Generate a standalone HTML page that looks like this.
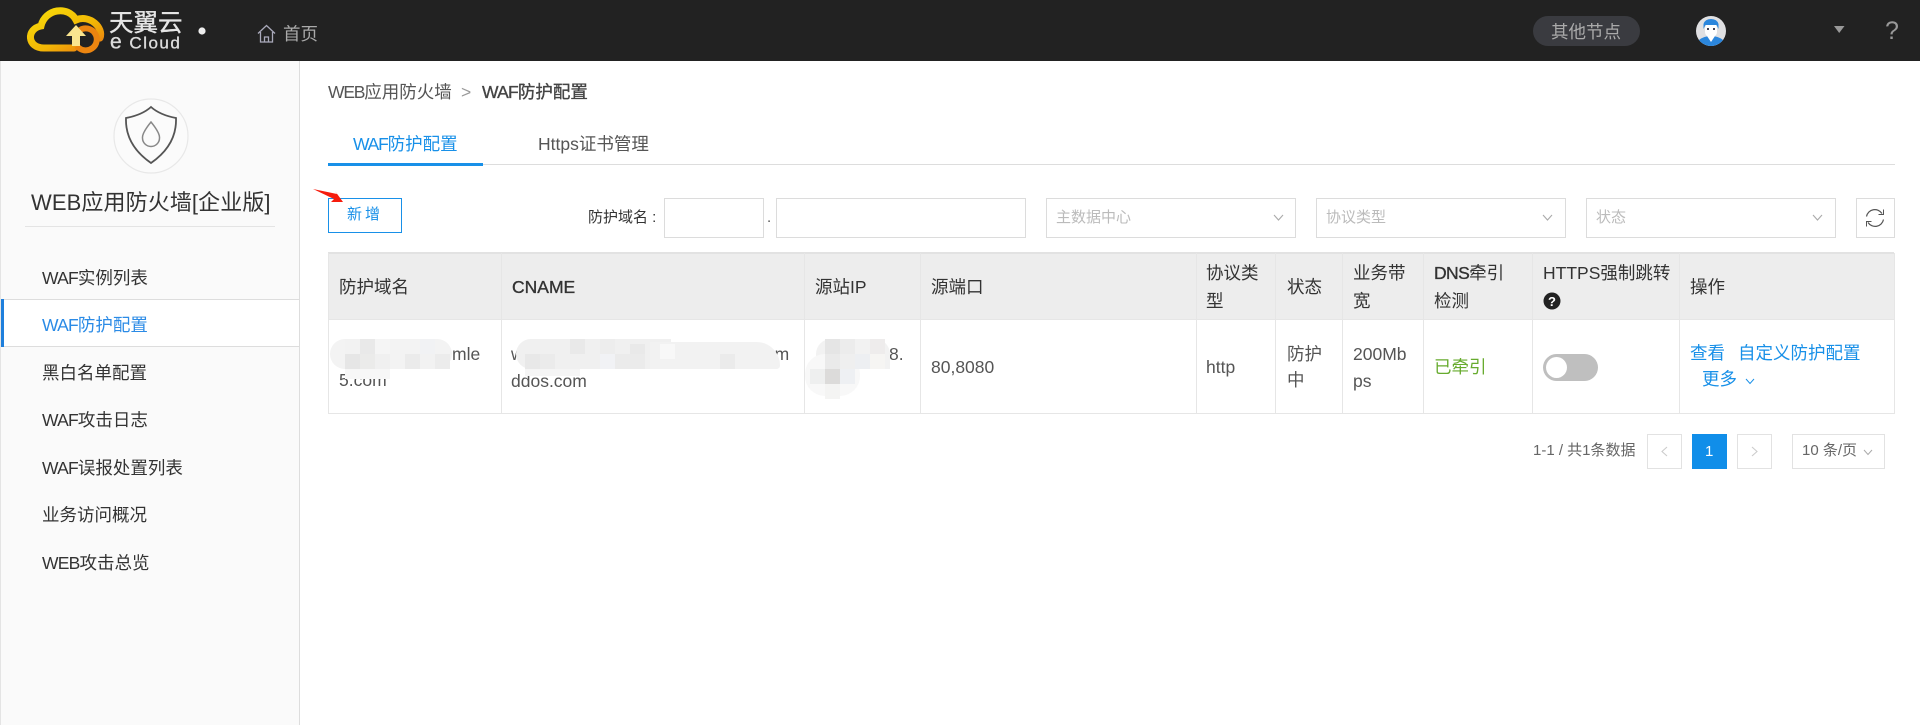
<!DOCTYPE html>
<html lang="zh"><head><meta charset="utf-8"><title>WAF防护配置</title>
<style>
html,body{margin:0;padding:0;background:#fff;}
body{position:relative;width:1920px;height:725px;overflow:hidden;font-family:"Liberation Sans","Noto Sans CJK SC",sans-serif;font-size:17.5px;color:#444;}
.b{position:absolute;box-sizing:border-box;}
.t{position:absolute;white-space:nowrap;line-height:24px;transform:translateY(-50%);}
.h{color:#333;}
.w{letter-spacing:-.8px;}
.s{-webkit-text-stroke:.35px currentColor;}
.box{position:absolute;box-sizing:border-box;border:1.5px solid #dcdcdc;background:#fff;}
.ph{position:absolute;white-space:nowrap;line-height:24px;transform:translateY(-50%);font-size:15px;color:#bbb;}
.v{position:absolute;top:253px;height:161px;width:1px;background:#e6e6e6;}
.m{position:absolute;width:15px;height:15px;}
svg{position:absolute;overflow:visible;}
</style></head><body>
<div class="b" style="left:0;top:0;width:1920px;height:61px;background:#222;"></div>
<svg style="left:0;top:0" width="220" height="61" viewBox="0 0 220 61">
<defs><linearGradient id="g" x1="0" y1="0" x2="1" y2="1"><stop offset="0" stop-color="#f7dc0a"/><stop offset=".6" stop-color="#f2b705"/><stop offset="1" stop-color="#ea7a10"/></linearGradient></defs>
<path d="M74 48H44C27 48 26 29 41 26C45 9 68 5 76 20C90 14 104 28 100 38" fill="none" stroke="url(#g)" stroke-width="7" stroke-linecap="round"/>
<path d="M80 30A11 11 0 1 1 77 46" fill="none" stroke="#ec8510" stroke-width="6"/>
<path d="M76 25L86 36H80V46H72V36H66Z" fill="#f9e58f"/>
<circle cx="202" cy="31" r="3.6" fill="#eee"/>
</svg>
<div class="t s" style="left:109px;top:24px;font-size:24.500px;color:#e6e6e6;">天翼云</div>
<div class="t s" style="left:110px;top:43px;font-size:17px;color:#ddd;letter-spacing:1.500px;"><span style="font-size:21px;">e</span> Cloud</div>
<svg style="left:257px;top:24px" width="20" height="20" viewBox="0 0 20 20" fill="none" stroke="#aab" stroke-width="1.3"><path d="M1 9.500L9.500 1.500L18 9.500M3.500 8V18H15.500V8M7.500 18V13H11.500V18"/></svg>
<div class="t" style="left:283px;top:34px;color:#aaa;">首页</div>
<div class="b" style="left:1533px;top:16px;width:107px;height:30px;border-radius:15px;background:#3a3b40;"></div>
<div class="t" style="left:1551px;top:32px;color:#aaa;">其他节点</div>
<svg style="left:1696px;top:16px" width="30" height="30" viewBox="0 0 30 30">
<circle cx="15" cy="15" r="15" fill="#e0e0e2"/><path d="M3 24Q8 20 15 20Q22 20 27 24A15 15 0 0 1 3 24Z" fill="#2b86dc"/><path d="M11 20L15 26L19 20Z" fill="#fff"/><rect x="9" y="7" width="12" height="14" rx="5" fill="#fff"/><path d="M7.500 13V8Q9 3 15 3Q21 3 22.500 8V13L20.500 9H9.500Z" fill="#2b86dc"/><rect x="11" y="12" width="2" height="2" fill="#445"/><rect x="17" y="12" width="2" height="2" fill="#445"/>
</svg>
<svg style="left:1834px;top:26px" width="11" height="8"><path d="M0 0H10.500L5.200 7Z" fill="#999"/></svg>
<div class="t" style="left:1885px;top:31px;font-size:25px;color:#999;">?</div>

<div class="b" style="left:0;top:61px;width:300px;height:664px;background:#fafafa;border-left:1px solid #e4e4e4;border-right:1.5px solid #ddd;"></div>
<svg style="left:113px;top:98px" width="76" height="76" viewBox="0 0 76 76" fill="none">
<circle cx="38" cy="38" r="37" fill="#fbfbfb" stroke="#e8e8e8" stroke-width="1.2"/>
<path d="M38 9Q47 17 63 20Q64 47 38 65Q12 47 13 20Q29 17 38 9Z" stroke="#555" stroke-width="1.8"/>
<path d="M38 24Q47 35 46.500 40A8.500 8.500 0 0 1 29.500 40Q29 35 38 24Z" stroke="#888" stroke-width="1.500"/>
</svg>
<div class="t" style="left:31px;top:203px;font-size:22px;color:#333;letter-spacing:.1px;">WEB应用防火墙[企业版]</div>
<div class="b" style="left:25px;top:226px;width:250px;height:1px;background:#e4e4e4;"></div>
<div class="b" style="left:1px;top:299px;width:298px;height:48px;background:#fff;border-top:1.5px solid #ddd;border-bottom:1.5px solid #ddd;"></div>
<div class="b" style="left:1px;top:299px;width:3px;height:48px;background:#1e7fdc;"></div>
<div class="t h" style="left:42px;top:278px;"><span class="w">WAF</span>实例列表</div>
<div class="t" style="left:42px;top:325px;color:#2b8be6;"><span class="w">WAF</span>防护配置</div>
<div class="t h" style="left:42px;top:373px;">黑白名单配置</div>
<div class="t h" style="left:42px;top:420px;"><span class="w">WAF</span>攻击日志</div>
<div class="t h" style="left:42px;top:468px;"><span class="w">WAF</span>误报处置列表</div>
<div class="t h" style="left:42px;top:515px;">业务访问概况</div>
<div class="t h" style="left:42px;top:563px;"><span class="w">WEB</span>攻击总览</div>

<div class="t" style="left:328px;top:92px;color:#555;"><span style="letter-spacing:-1.200px">WEB</span>应用防火墙</div>
<div class="t" style="left:461px;top:92px;color:#999;">&gt;</div>
<div class="t s" style="left:482px;top:92px;color:#444;"><span class="w">WAF</span>防护配置</div>

<div class="b" style="left:328px;top:164px;width:1567px;height:1px;background:#ddd;"></div>
<div class="b" style="left:328px;top:163px;width:155px;height:3px;background:#1890e8;"></div>
<div class="t" style="left:353px;top:144px;color:#1890e8;"><span style="letter-spacing:-1.200px">WAF</span>防护配置</div>
<div class="t" style="left:538px;top:144px;color:#555;">Https证书管理</div>

<div class="b" style="left:328px;top:198px;width:74px;height:35px;border:1.5px solid #1890e8;background:#fff;"></div>
<div class="t" style="left:347px;top:215px;font-size:15px;color:#1890e8;letter-spacing:3px;">新增</div>
<svg style="left:312px;top:188px" width="34" height="16"><path d="M1 1L25 6L23 3L31 14L19 14L22 11Z" fill="#f61c0d"/></svg>

<div class="t" style="left:588px;top:218px;font-size:15px;color:#333;">防护域名 :</div>
<div class="box" style="left:664px;top:198px;width:100px;height:40px;"></div>
<div class="t" style="left:767px;top:218px;font-size:15px;color:#555;">.</div>
<div class="box" style="left:776px;top:198px;width:250px;height:40px;"></div>
<div class="box" style="left:1046px;top:198px;width:250px;height:40px;"></div>
<div class="ph" style="left:1056px;top:218px;">主数据中心</div>
<div class="box" style="left:1316px;top:198px;width:250px;height:40px;"></div>
<div class="ph" style="left:1326px;top:218px;">协议类型</div>
<div class="box" style="left:1586px;top:198px;width:250px;height:40px;"></div>
<div class="ph" style="left:1596px;top:218px;">状态</div>
<svg style="left:1273px;top:214px" width="11" height="7" fill="none" stroke="#aaa" stroke-width="1.100"><path d="M1 1L5.500 6L10 1"/></svg>
<svg style="left:1542px;top:214px" width="11" height="7" fill="none" stroke="#aaa" stroke-width="1.100"><path d="M1 1L5.500 6L10 1"/></svg>
<svg style="left:1812px;top:214px" width="11" height="7" fill="none" stroke="#aaa" stroke-width="1.100"><path d="M1 1L5.500 6L10 1"/></svg>
<div class="box" style="left:1856px;top:198px;width:39px;height:40px;"></div>
<svg style="left:1865px;top:208px" width="20" height="20" viewBox="0 0 20 20" fill="none" stroke="#555" stroke-width="1.200"><path d="M1.500 8.500A8.500 8.500 0 0 1 17 5.500M18.500 11.500A8.500 8.500 0 0 1 3 14.500"/><path d="M18.500 1.500V6.500H13.500M1.500 18.500V13.500H6.500" stroke-width="1"/></svg>

<div class="b" style="left:328px;top:252px;width:1566px;height:68px;background:#ededed;border-top:2px solid #e2e2e2;"></div>
<div class="b" style="left:328px;top:319px;width:1566px;height:95px;border-bottom:1.5px solid #e6e6e6;border-top:1px solid #e6e6e6;"></div>
<div class="v" style="left:328px"></div><div class="v" style="left:501px"></div><div class="v" style="left:804px"></div><div class="v" style="left:920px"></div><div class="v" style="left:1196px"></div><div class="v" style="left:1275px"></div><div class="v" style="left:1342px"></div><div class="v" style="left:1423px"></div><div class="v" style="left:1532px"></div><div class="v" style="left:1679px"></div><div class="v" style="left:1894px"></div>

<div class="t h" style="left:339px;top:287px;">防护域名</div>
<div class="t h s" style="left:512px;top:287px;">CNAME</div>
<div class="t h" style="left:815px;top:287px;">源站IP</div>
<div class="t h" style="left:931px;top:287px;">源端口</div>
<div class="t h" style="left:1206px;top:273px;">协议类</div>
<div class="t h" style="left:1206px;top:301px;">型</div>
<div class="t h" style="left:1287px;top:287px;">状态</div>
<div class="t h" style="left:1353px;top:273px;">业务带</div>
<div class="t h" style="left:1353px;top:301px;">宽</div>
<div class="t h" style="left:1434px;top:273px;"><span class="s" style="letter-spacing:-.6px">DNS</span>牵引</div>
<div class="t h" style="left:1434px;top:301px;">检测</div>
<div class="t h" style="left:1543px;top:273px;">HTTPS强制跳转</div>
<svg style="left:1543px;top:292px" width="18" height="18"><circle cx="9" cy="9" r="8.500" fill="#222"/><text x="9" y="14" font-size="13" font-weight="700" text-anchor="middle" fill="#fff" font-family="Liberation Sans">?</text></svg>
<div class="t h" style="left:1690px;top:287px;">操作</div>

<div class="t" style="left:339px;top:380px;color:#555;">5.com</div>
<div class="t" style="left:452px;top:354px;color:#555;">mle</div>
<div class="t" style="left:511px;top:354px;color:#555;">w</div>
<div class="t" style="left:761px;top:354px;color:#555;">lam</div>
<div class="t" style="left:511px;top:381px;color:#555;">ddos.com</div>
<div class="t" style="left:889px;top:354px;color:#555;">8.</div>
<div class="t" style="left:931px;top:367px;color:#555;">80,8080</div>
<div class="t" style="left:1206px;top:367px;color:#555;">http</div>
<div class="t" style="left:1287px;top:354px;color:#555;">防护</div>
<div class="t" style="left:1287px;top:380px;color:#555;">中</div>
<div class="t" style="left:1353px;top:354px;color:#555;">200Mb</div>
<div class="t" style="left:1353px;top:381px;color:#555;">ps</div>
<div class="t" style="left:1434px;top:367px;color:#67ab2e;">已牵引</div>
<div class="b" style="left:1543px;top:354px;width:55px;height:27px;border-radius:14px;background:#bfbfbf;"></div>
<div class="b" style="left:1546px;top:357px;width:21px;height:21px;border-radius:50%;background:#fff;"></div>
<div class="t" style="left:1690px;top:353px;color:#1890e8;">查看</div>
<div class="t" style="left:1738px;top:353px;color:#1890e8;">自定义防护配置</div>
<div class="t" style="left:1702px;top:379px;color:#1890e8;">更多</div>
<svg style="left:1745px;top:378px" width="10" height="7" fill="none" stroke="#1890e8" stroke-width="1"><path d="M1 1L5 5.500L9 1"/></svg>

<!-- mosaic domain -->
<div class="b" style="left:330px;top:339px;width:122px;height:30px;border-radius:15px;background:#f3f3f3;"></div>
<div class="b" style="left:345px;top:369px;width:45px;height:10px;background:#f7f7f7;"></div>
<div class="m" style="left:345px;top:339px;background:#f2f2f2"></div><div class="m" style="left:360px;top:339px;background:#e9e9e9"></div><div class="m" style="left:375px;top:339px;background:#f5f5f5"></div><div class="m" style="left:420px;top:339px;background:#f1f2f4"></div>
<div class="m" style="left:345px;top:354px;background:#e6e6e6"></div><div class="m" style="left:360px;top:354px;background:#ebebea"></div><div class="m" style="left:375px;top:354px;background:#f0f0f0"></div><div class="m" style="left:405px;top:354px;background:#ebebeb"></div><div class="m" style="left:420px;top:354px;background:#f2f2f2"></div><div class="m" style="left:435px;top:354px;background:#ececec"></div>
<!-- mosaic cname -->
<div class="b" style="left:516px;top:339px;width:155px;height:30px;border-radius:15px 0 0 15px;background:#f0f0f0;"></div>
<div class="b" style="left:650px;top:342px;width:130px;height:27px;border-radius:0 40px 6px 0;background:#f2f2f2;"></div>
<div class="b" style="left:525px;top:369px;width:55px;height:7px;background:#f5f5f5;"></div>
<div class="m" style="left:570px;top:339px;background:#e9e9e9"></div><div class="m" style="left:600px;top:339px;background:#ededed"></div><div class="m" style="left:630px;top:344px;background:#e9e9e9"></div><div class="m" style="left:660px;top:344px;background:#f8f8f8"></div>
<div class="m" style="left:525px;top:354px;background:#e8e8e8"></div><div class="m" style="left:540px;top:354px;background:#ebebeb"></div><div class="m" style="left:600px;top:354px;background:#f1f2f5"></div><div class="m" style="left:615px;top:354px;background:#ebebeb"></div><div class="m" style="left:630px;top:354px;background:#ebebeb"></div><div class="m" style="left:720px;top:354px;background:#ebebeb"></div>
<!-- mosaic ip -->
<div class="b" style="left:816px;top:339px;width:74px;height:30px;border-radius:15px 15px 0 0;background:#f2f2f2;"></div>
<div class="b" style="left:805px;top:354px;width:55px;height:42px;border-radius:20px;background:#f8f8f8;"></div>
<div class="m" style="left:825px;top:339px;background:#e5e5e5"></div><div class="m" style="left:840px;top:339px;background:#ececec"></div><div class="m" style="left:870px;top:339px;background:#eeecec"></div>
<div class="m" style="left:825px;top:354px;background:#eaeaea"></div><div class="m" style="left:840px;top:354px;background:#efefef"></div><div class="m" style="left:855px;top:354px;background:#edeff2"></div><div class="m" style="left:870px;top:354px;background:#f6f5f3"></div>
<div class="m" style="left:810px;top:369px;background:#eeefef"></div><div class="m" style="left:825px;top:369px;background:#dcdbda"></div><div class="m" style="left:840px;top:369px;background:#eef0f3"></div>
<div class="m" style="left:825px;top:384px;background:#f4f4f3"></div>

<div class="t" style="left:1533px;top:451px;font-size:15px;color:#666;">1-1 / 共1条数据</div>
<div class="box" style="left:1647px;top:434px;width:35px;height:35px;border-color:#e2e2e2;"></div>
<svg style="left:1661px;top:446px" width="7" height="11" fill="none" stroke="#ccc" stroke-width="1.100"><path d="M6 1L1 5.500L6 10"/></svg>
<div class="b" style="left:1692px;top:434px;width:35px;height:35px;background:#108ee9;"></div>
<div class="t" style="left:1705px;top:452px;font-size:15px;color:#fff;">1</div>
<div class="box" style="left:1737px;top:434px;width:35px;height:35px;border-color:#e2e2e2;"></div>
<svg style="left:1751px;top:446px" width="7" height="11" fill="none" stroke="#ccc" stroke-width="1.100"><path d="M1 1L6 5.500L1 10"/></svg>
<div class="box" style="left:1792px;top:434px;width:93px;height:35px;border-color:#e2e2e2;"></div>
<div class="t" style="left:1802px;top:451px;font-size:15px;color:#666;">10 条/页</div>
<svg style="left:1863px;top:449px" width="10" height="7" fill="none" stroke="#aaa" stroke-width="1"><path d="M1 1L5 5.500L9 1"/></svg>
</body></html>
